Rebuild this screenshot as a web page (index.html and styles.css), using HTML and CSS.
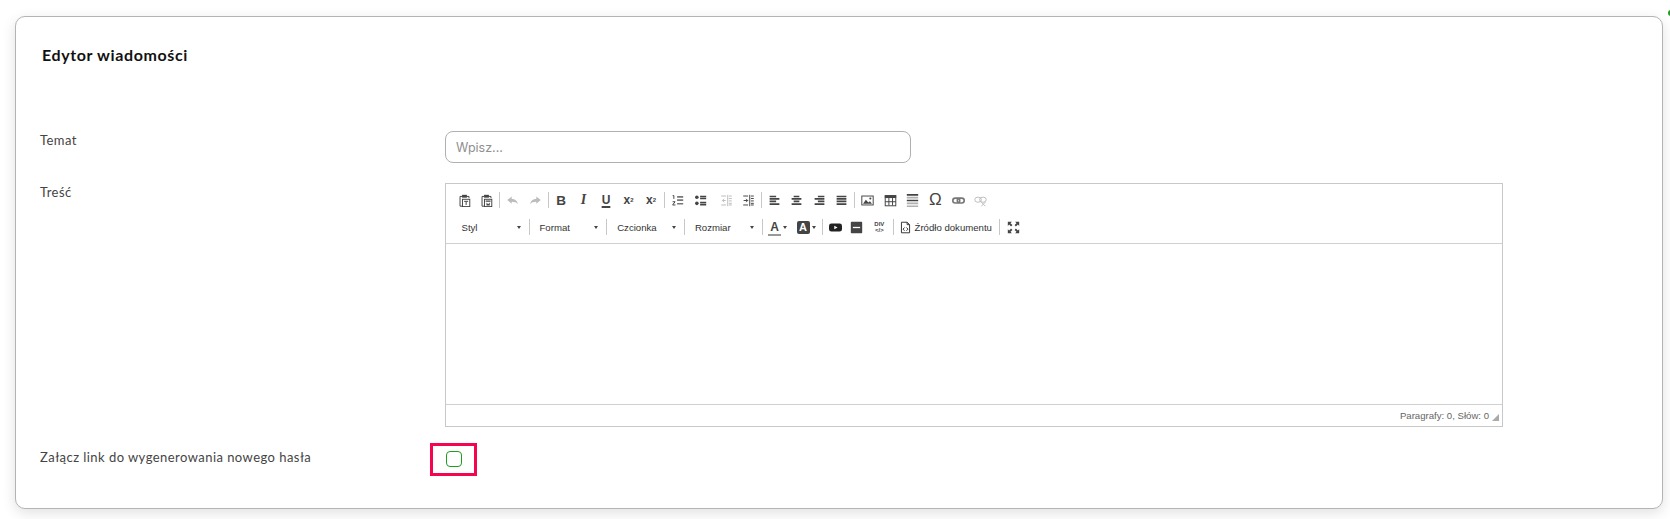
FILE: index.html
```html
<!DOCTYPE html>
<html lang="pl">

<head>
    <meta charset="UTF-8">
    <meta name="viewport" content="width=device-width, initial-scale=1.0">
    <title>Edytor wiadomości</title>
    <link rel="stylesheet" href="styles.css">
</head>

<body>
    <span class="status-dot"></span>

    <div class="card">
        <h4 class="card-title">Edytor wiadomości</h4>

        <div class="form-row row-subject">
            <label class="form-label" for="subject">Temat</label>
            <input class="form-input" type="text" id="subject" placeholder="Wpisz...">
        </div>

        <div class="form-row row-content">
            <label class="form-label">Treść</label>

            <div class="editor">
                <div class="toolbar">
                    <div class="tool-row">
                        <span class="tool"><svg viewBox="0 0 16 16"><path class="ln" d="M5 3H2.500v12H5M11 3h2.500v2"/><rect x="5" y="1" width="6" height="3.500" fill="currentColor"/><rect class="ln" x="5.500" y="6.500" width="9" height="9"/><path class="ln" d="M7.500 9h5M10 9v4.500"/></svg></span>
                        <span class="tool"><svg viewBox="0 0 16 16"><path class="ln" d="M5 3H2.500v12H5M11 3h2.500v2"/><rect x="5" y="1" width="6" height="3.500" fill="currentColor"/><rect class="ln" x="5.500" y="6.500" width="9" height="9"/><path d="M7 8h6v1.500H7zM8 10.500l2 2 2-2v3.500H8z" fill="currentColor"/></svg></span>
                        <span class="tool-sep"></span>
                        <span class="tool off"><svg viewBox="0 0 16 16"><path d="M1.500 7.500 7 3v3c4 0 7 2 7.500 6.500C13 10.500 10.500 9.500 7 9.500V12z" fill="currentColor"/></svg></span>
                        <span class="tool off"><svg viewBox="0 0 16 16"><path d="M14.500 7.500 9 3v3c-4 0-7 2-7.500 6.500C3 10.500 5.500 9.500 9 9.500V12z" fill="currentColor"/></svg></span>
                        <span class="tool-sep"></span>
                        <span class="tool glyph-b">B</span>
                        <span class="tool glyph-i">I</span>
                        <span class="tool glyph-u">U</span>
                        <span class="tool glyph-x">x<sub>2</sub></span>
                        <span class="tool glyph-x">x<sup>2</sup></span>
                        <span class="tool-sep wide"></span>
                        <span class="tool"><svg viewBox="0 0 16 16"><path class="ln" d="M2 2h1.500v4M2 9.500h3L2 13.500h3.500"/><path class="ln-b muted" d="M7.500 3.500H15M7.500 7.500H15M7.500 12H15"/></svg></span>
                        <span class="tool"><svg viewBox="0 0 16 16"><circle cx="3.500" cy="4" r="2.200" fill="currentColor"/><circle cx="3.500" cy="11.500" r="2.200" fill="currentColor"/><path class="ln-b" d="M7.500 3h7.500M7.500 5.500h7.500M7.500 10.500h7.500M7.500 13h7.500"/></svg></span>
                        <span class="tool-gap"></span>
                        <span class="tool off"><svg viewBox="0 0 16 16"><path class="ln" d="M9.500 1v14M1.500 2.500h6M1.500 13.500h6M11 2.500h3.500M11 5.500h3.500M11 8.500h3.500M11 11.500h3.500M11 13.500h3.500M3 8h4M5 6 3 8l2 2"/></svg></span>
                        <span class="tool"><svg viewBox="0 0 16 16"><path class="ln" d="M9.500 1v14M1.500 2.500h6M1.500 13.500h6M11 2.500h3.500M11 5.500h3.500M11 8.500h3.500M11 11.500h3.500M11 13.500h3.500M2 8h5M5 6l2 2-2 2"/></svg></span>
                        <span class="tool-sep"></span>
                        <span class="tool"><svg viewBox="0 0 16 16"><path class="ln-b" d="M2 3h8M2 6h12M2 9h8M2 12.500h12"/></svg></span>
                        <span class="tool"><svg viewBox="0 0 16 16"><path class="ln-b" d="M4.500 3h7M2 6h12M4.500 9h7M2 12.500h12"/></svg></span>
                        <span class="tool"><svg viewBox="0 0 16 16"><path class="ln-b" d="M6 3h8M2 6h12M6 9h8M2 12.500h12"/></svg></span>
                        <span class="tool"><svg viewBox="0 0 16 16"><path class="ln-b" d="M2 3h12M2 6h12M2 9h12M2 12.500h12"/></svg></span>
                        <span class="tool-sep"></span>
                        <span class="tool"><svg viewBox="0 0 16 16"><rect class="ln" x="1" y="2.500" width="14" height="11"/><path d="m2.500 12 3.500-5 3 3.500 2-1.500 2.500 3z" fill="currentColor"/><circle cx="11.500" cy="5.500" r="1.300" fill="currentColor"/></svg></span>
                        <span class="tool"><svg viewBox="0 0 16 16"><rect class="ln" x="1.500" y="2" width="13" height="12.500"/><rect x="1" y="1.500" width="14" height="3.500" fill="currentColor"/><path class="ln" d="M1.500 9.500h13M6 5v9M10.500 5v9"/></svg></span>
                        <span class="tool"><svg viewBox="0 0 16 16"><path d="M1 0h14v2H1zM1 7h14v2H1z" fill="currentColor"/><path d="M1 3.500h14v2H1zM1 10.500h14v2H1zM1 14h14v2H1z" fill="#b0b0b0"/></svg></span>
                        <span class="tool omega">Ω</span>
                        <span class="tool link"><svg viewBox="0 0 16 16"><rect class="ln-b muted" x="1" y="5" width="8.500" height="6" rx="3"/><rect class="ln-b muted" x="6.500" y="5" width="8.500" height="6" rx="3"/></svg></span>
                        <span class="tool off"><svg viewBox="0 0 16 16"><rect class="ln" x="1" y="4" width="8" height="6" rx="3"/><rect class="ln" x="7" y="4" width="8" height="6" rx="3"/><path class="ln" d="m9 10 5 5M14 10l-5 5"/></svg></span>
                    </div>

                    <div class="tool-row row-combos">
                        <span class="combo combo-first"><span>Styl</span><i class="caret"></i></span>
                        <span class="tool-sep flat"></span>
                        <span class="combo"><span>Format</span><i class="caret"></i></span>
                        <span class="tool-sep flat"></span>
                        <span class="combo"><span>Czcionka</span><i class="caret"></i></span>
                        <span class="tool-sep flat"></span>
                        <span class="combo"><span>Rozmiar</span><i class="caret"></i></span>
                        <span class="tool-sep flat"></span>
                        <span class="tool with-caret"><span class="glyph-color">A</span><i class="caret"></i></span>
                        <span class="tool with-caret"><span class="glyph-bg">A</span><i class="caret"></i></span>
                        <span class="tool-sep icon-sep"></span>
                        <span class="tool narrow"><svg viewBox="0 0 16 16"><path fill-rule="evenodd" d="M3 3h10a3 3 0 0 1 3 3v4a3 3 0 0 1-3 3H3a3 3 0 0 1-3-3V6a3 3 0 0 1 3-3zM6.500 5.800v4.400L10.500 8z" fill="#222"/></svg></span>
                        <span class="tool"><svg viewBox="0 0 16 16"><rect x="1" y="1" width="14" height="14" rx="1" fill="currentColor"/><path d="M3.500 7.200h9v1.600h-9z" fill="#fff"/></svg></span>
                        <span class="tool div-tag"><span>DIV</span><span>&lt;/&gt;</span></span>
                        <span class="tool-sep icon-sep"></span>
                        <span class="tool source"><svg viewBox="0 0 16 16"><path class="ln" d="M3 1.500h7l3 3v10H3zM10 1.500v3h3"/><path class="ln" d="M6.800 8 5 10l1.800 2M9.200 8l1.800 2-1.800 2"/></svg><span>Źródło dokumentu</span></span>
                        <span class="tool-sep icon-sep"></span>
                        <span class="tool"><svg viewBox="0 0 16 16"><path d="M1 1h5L4.300 2.700 6.700 5 5 6.700 2.700 4.300 1 6zM15 1v5l-1.700-1.700L11 6.700 9.300 5l2.400-2.300L10 1zM1 15v-5l1.700 1.700L5 9.300 6.700 11l-2.400 2.300L6 15zM15 15h-5l1.700-1.700L9.300 11 11 9.300l2.300 2.400L15 10z" fill="currentColor"/></svg></span>
                    </div>
                </div>

                <div class="editor-body"></div>

                <div class="editor-status">
                    <span>Paragrafy: 0, Słów: 0</span>
                    <i class="resizer"></i>
                </div>
            </div>
        </div>

        <div class="form-row row-attach">
            <label class="form-label" for="attach">Załącz link do wygenerowania nowego hasła</label>
            <div class="highlight">
                <input class="form-check" type="checkbox" id="attach">
            </div>
        </div>
    </div>
</body>

</html>
```

FILE: styles.css
```css
body {
    font-family: Lato, "Noto Sans", sans-serif;
    margin: 0;
    padding: 16px 7px 10px 15px;
    background-color: #fff;
    color: #444;
}

.status-dot {
    position: absolute;
    top: 10px;
    left: 1668px;
    width: 6px;
    height: 6px;
    border-radius: 50%;
    background: #1f9d1f;
}

.card {
    height: 493px;
    box-sizing: border-box;
    padding: 29px 0 0 24px;
    background: #fff;
    border: 1px solid #b4b4b4;
    border-radius: 10px;
    box-shadow: 0 4px 14px rgba(0, 0, 0, 0.12);
}

.card-title {
    margin: 0 0 0 2px;
    height: 85px;
    font-size: 16px;
    line-height: 18px;
    font-weight: 700;
    letter-spacing: 0.62px;
    color: #111;
}

.form-row {
    display: grid;
    grid-template-columns: 405px 1fr;
}

.form-label {
    font-size: 13px;
    line-height: 18px;
    letter-spacing: 0.45px;
    color: #444;
}

.row-subject {
    height: 52px;
}

.form-input {
    width: 466px;
    height: 32px;
    box-sizing: border-box;
    padding: 0 10px;
    border: 1px solid #b0b0b0;
    border-radius: 8px;
    font-family: Inter, sans-serif;
    font-size: 12.5px;
    outline: none;
}

.form-input::placeholder {
    color: #8f8f8f;
}

.row-content {
    height: 260px;
}

/* wysiwyg box */
.editor {
    width: 1058px;
    height: 244px;
    box-sizing: border-box;
    display: flex;
    flex-direction: column;
    border: 1px solid #c8c8c8;
    font-family: "Liberation Sans", Arial, sans-serif;
    font-size: 9.6px;
    color: #333;
}

.toolbar {
    height: 60px;
    flex-shrink: 0;
    box-sizing: border-box;
    padding: 5px 0 0 7px;
    border-bottom: 1px solid #d0d0d0;
}

.tool-row {
    display: flex;
    align-items: center;
    height: 22px;
    margin-bottom: 5px;
}

.tool {
    display: flex;
    align-items: center;
    justify-content: center;
    width: 22.5px;
    height: 20px;
    flex-shrink: 0;
    color: #444;
}

.tool svg {
    width: 13px;
    height: 13px;
    display: block;
    flex-shrink: 0;
}

.tool.off {
    color: #bcbcbc;
}

.tool.narrow {
    width: 21px;
}

.tool.link {
    padding-left: 2px;
    width: 20.5px;
}

.ln {
    fill: none;
    stroke: currentColor;
    stroke-width: 1.2;
}

.ln-b {
    fill: none;
    stroke: currentColor;
    stroke-width: 2;
}

.muted {
    stroke: #777;
}

.tool-sep {
    width: 1px;
    height: 16px;
    margin: 0 1.2px;
    flex-shrink: 0;
    background: #c8c8c8;
}

.tool-sep.wide {
    margin: 0 1.5px;
}

.tool-sep.flat {
    margin: 0;
}

.tool-sep.icon-sep {
    margin: 0 2px;
}

.tool-gap {
    width: 3.5px;
    flex-shrink: 0;
}

/* text style buttons */
.glyph-b {
    font-size: 13.5px;
    font-weight: 700;
}

.glyph-i {
    font-family: "Liberation Serif", serif;
    font-size: 14px;
    font-weight: 700;
    font-style: italic;
}

.glyph-u {
    font-size: 12px;
    font-weight: 700;
    text-decoration: underline;
    text-decoration-thickness: 1.5px;
    text-underline-offset: 1.5px;
}

.glyph-x {
    font-size: 12px;
    font-weight: 700;
}

.glyph-x sub,
.glyph-x sup {
    font-size: 6px;
    line-height: 0;
}

.glyph-color {
    display: block;
    width: 13px;
    font-size: 12px;
    font-weight: 700;
    line-height: 13px;
    text-align: center;
    box-shadow: 0 2px 0 #999;
}

.glyph-bg {
    display: block;
    width: 13px;
    height: 13px;
    border-radius: 2px;
    background: #444;
    color: #fff;
    font-size: 11px;
    font-weight: 700;
    line-height: 13px;
    text-align: center;
}

.div-tag {
    flex-direction: column;
    font-size: 6px;
    font-weight: 700;
    line-height: 6.5px;
}

.omega {
    font-family: "Liberation Sans", sans-serif;
    font-size: 17px;
}

.row-combos {
    padding-left: 2px;
}

.combo {
    display: flex;
    align-items: center;
    justify-content: space-between;
    width: 76.7px;
    box-sizing: border-box;
    flex-shrink: 0;
    padding: 0 8px 0 10px;
}

.combo-first {
    width: 73.5px;
    padding-left: 6.5px;
}

.caret {
    display: block;
    flex-shrink: 0;
    width: 0;
    height: 0;
    border-left: 2.5px solid transparent;
    border-right: 2.5px solid transparent;
    border-top: 3px solid #444;
}

.tool.with-caret {
    width: 28.5px;
    box-sizing: border-box;
    justify-content: flex-start;
    padding-left: 5.5px;
    gap: 2px;
}

.tool.source {
    width: auto;
    padding: 0 5px 0 3px;
    gap: 3px;
    color: #333;
}

.editor-body {
    flex: 1;
    background: #fff;
}

.editor-status {
    display: flex;
    align-items: center;
    justify-content: flex-end;
    height: 22px;
    box-sizing: border-box;
    padding-right: 3px;
    border-top: 1px solid #d0d0d0;
    color: #666;
}

.resizer {
    display: block;
    width: 0;
    height: 0;
    margin: 4px 0 0 3px;
    border-left: 7px solid transparent;
    border-bottom: 7px solid #aaa;
}

.row-attach .form-label {
    margin-top: 5px;
}

.highlight {
    display: flex;
    justify-content: center;
    align-items: center;
    width: 47px;
    height: 33px;
    box-sizing: border-box;
    margin-left: -15px;
    padding-bottom: 1px;
    border: 3px solid #f5054f;
}

.form-check {
    appearance: none;
    width: 16px;
    height: 16px;
    margin: 0;
    border: 1px solid #1f9d1f;
    border-radius: 4px;
    background: #fff;
}
```
